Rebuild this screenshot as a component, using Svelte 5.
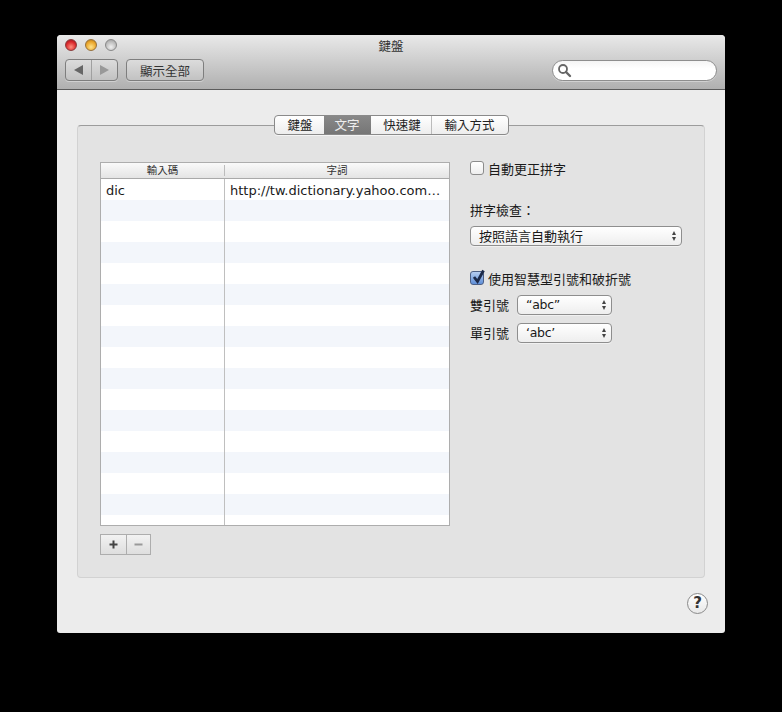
<script>
  const rows = Array(17).fill(null).map((_, index) => index);
  const tabs = ['鍵盤', '文字', '快速鍵', '輸入方式'];
  const quotes = [
    { label: '雙引號', value: '“abc”' },
    { label: '單引號', value: '‘abc’' }
  ];
</script>

<main>
  <div class="window">
    <header>
      <div class="title">鍵盤</div>
      <div class="lights">
        <span class="light red"></span>
        <span class="light amber"></span>
        <span class="light grey"></span>
      </div>
      <div class="tools">
        <div class="nav">
          <div class="navbtn back">
            <svg width="9" height="10" viewBox="0 0 9 10"><path d="M0 5 L9 0 V10 Z" fill="#666" /></svg>
          </div>
          <div class="navbtn forward">
            <svg width="9" height="10" viewBox="0 0 9 10"><path d="M9 5 L0 0 V10 Z" fill="#999" /></svg>
          </div>
        </div>
        <button class="showall">顯示全部</button>
        <div class="search">
          <svg width="15" height="15" viewBox="0 0 15 15">
            <circle cx="6" cy="6" r="4" fill="none" stroke="#666" stroke-width="1.8" />
            <path d="M9 9 L13 13" stroke="#666" stroke-width="2.4" stroke-linecap="round" />
          </svg>
        </div>
      </div>
    </header>

    <div class="content">
      <div class="tabs">
        {#each tabs as tab, i}
          <div class={i === 1 ? 'tab on' : 'tab'}>{tab}</div>
        {/each}
      </div>
      <section class="panel">
        <div class="left">
          <div class="table">
            <div class="thead">
              <div class="c1">輸入碼</div>
              <div class="c2">字詞</div>
            </div>
            <div class="tbody">
              {#each rows as row}
                <div class={row % 2 ? 'row alt' : 'row'}>
                  <div class="c1">{row === 0 ? 'dic' : ''}</div>
                  <div class="c2">{row === 0 ? 'http://tw.dictionary.yahoo.com…' : ''}</div>
                </div>
              {/each}
            </div>
          </div>
          <div class="addremove">
            <div class="ar plus">
              <svg width="11" height="11" viewBox="0 0 11 11"><path d="M5.5 1.5v8M1.5 5.5h8" stroke="#444" stroke-width="2" /></svg>
            </div>
            <div class="ar minus">
              <svg width="11" height="11" viewBox="0 0 11 11"><path d="M1.5 5.5h8" stroke="#999" stroke-width="2" /></svg>
            </div>
          </div>
        </div>

        <div class="right">
          <label class="check first">
            <span class="box"></span>
            <span>自動更正拼字</span>
          </label>
          <div class="spell">拼字檢查：</div>
          <div class="select wide">
            <span>按照語言自動執行</span>
            <span class="updown"></span>
          </div>
          <label class="check second">
            <span class="box checked">
              <svg width="17" height="17" viewBox="0 0 17 17">
                <path d="M4 8 L7.5 12.5 L13.5 1.5" fill="none" stroke="#1c2a4a" stroke-width="2.8" />
              </svg>
            </span>
            <span>使用智慧型引號和破折號</span>
          </label>
          {#each quotes as q}
            <div class="quote">
              <span class="qlabel">{q.label}</span>
              <div class="select small">
                <span>{q.value}</span>
                <span class="updown"></span>
              </div>
            </div>
          {/each}
        </div>
      </section>
      <div class="foot">
        <div class="help">?</div>
      </div>
    </div>
  </div>
</main>

<style>
  :global(body) {
    background: #000;
  }
  main {
    width: 782px;
    height: 712px;
    padding: 35px 57px 0;
    box-sizing: border-box;
    font-family: "DejaVu Sans", "Noto Sans CJK TC", sans-serif;
    font-size: 13px;
    color: #1a1a1a;
    background: #000;
  }
  .window {
    width: 668px;
    height: 598px;
    border-radius: 4px 4px 3px 3px;
    overflow: hidden;
    background: #ececec;
  }
  header {
    position: relative;
    height: 55px;
    box-sizing: border-box;
    background: linear-gradient(#e9e9e9, #b0b0b0);
    border-bottom: 1px solid #5c5c5c;
  }
  .title {
    padding-top: 4px;
    height: 16px;
    text-align: center;
    font-size: 12.5px;
    line-height: 16px;
    color: #333;
  }
  .lights {
    position: absolute;
    left: 8px;
    top: 4px;
    display: flex;
    gap: 8px;
  }
  .light {
    width: 12px;
    height: 12px;
    border-radius: 50%;
    box-sizing: border-box;
  }
  .red {
    background: radial-gradient(circle at 50% 70%, #ff8f7e, #d8262a 60%, #8f1a22);
    border: 1px solid #8a3a3a;
  }
  .amber {
    background: radial-gradient(circle at 50% 70%, #ffe38a, #eaa52a 60%, #a8741a);
    border: 1px solid #96703a;
  }
  .grey {
    background: radial-gradient(circle at 50% 70%, #f0f0f0, #bdbdbd 60%, #999);
    border: 1px solid #888;
  }
  .tools {
    display: flex;
    align-items: center;
    padding: 4px 8px 0;
  }
  .nav, .showall {
    height: 22px;
    box-sizing: border-box;
    border: 1px solid #7e7e7e;
    border-radius: 4px;
    background: linear-gradient(#dcdcdc, #c2c2c2);
    box-shadow: 0 1px 0 rgba(255, 255, 255, 0.35);
  }
  .nav {
    width: 53px;
    display: flex;
  }
  .navbtn {
    display: flex;
    align-items: center;
    justify-content: center;
    box-sizing: border-box;
  }
  .back {
    width: 26px;
    border-right: 1px solid #a0a0a0;
  }
  .forward {
    flex: 1;
  }
  .showall {
    width: 78px;
    margin-left: 8px;
    padding: 0;
    font: inherit;
    font-size: 12.5px;
    color: #333;
  }
  .search {
    width: 165px;
    height: 21px;
    margin-left: auto;
    box-sizing: border-box;
    padding-left: 4px;
    display: flex;
    align-items: center;
    background: linear-gradient(#f4f4f4, #fff 40%);
    border: 1px solid #8e8e8e;
    border-radius: 11px;
    box-shadow: 0 1px 0 rgba(255, 255, 255, 0.35);
  }
  .content {
    padding: 25px 20px 0;
  }
  .tabs {
    position: relative;
    z-index: 1;
    width: 235px;
    height: 20px;
    margin: 0 auto -10px;
    display: flex;
    box-sizing: border-box;
    border: 1px solid #8a8a8a;
    border-radius: 4px;
    background: linear-gradient(#fff, #ededed);
    overflow: hidden;
    box-shadow: 0 1px 0 rgba(255, 255, 255, 0.6);
    font-size: 12.5px;
  }
  .tab {
    line-height: 20px;
    text-align: center;
    color: #222;
    box-sizing: border-box;
  }
  .tab:nth-child(1) { width: 49px; padding-left: 2px; }
  .tab:nth-child(2) { width: 47px; }
  .tab:nth-child(3) { width: 61px; padding-left: 3px; border-right: 1px solid #bbb; }
  .tab:nth-child(4) { flex: 1; }
  .tab.on {
    background: linear-gradient(#888, #767676);
    color: #eee;
  }
  .panel {
    height: 453px;
    box-sizing: border-box;
    display: flex;
    padding: 36px 22px 0;
    background: #e3e3e3;
    border: 1px solid #d2d2d2;
    border-top-color: #9c9c9c;
    border-radius: 4px;
  }
  .left {
    width: 350px;
  }
  .table {
    height: 364px;
    box-sizing: border-box;
    border: 1px solid #adadad;
    background: #fff;
    overflow: hidden;
  }
  .thead {
    display: flex;
    height: 16px;
    box-sizing: border-box;
    border-bottom: 1px solid #a9a9a9;
    background: linear-gradient(#fafafa, #e4e4e4);
    font-size: 10.5px;
    color: #333;
    text-align: center;
    align-items: flex-start;
  }
  .thead .c1 {
    height: 11px;
    margin-top: 2px;
    line-height: 11px;
    border-right: 1px solid #bcbcbc;
  }
  .thead .c2 {
    margin-top: 2px;
    line-height: 11px;
  }
  .c1 {
    width: 124px;
    flex: none;
    box-sizing: border-box;
  }
  .c2 {
    flex: 1;
  }
  .row {
    display: flex;
    height: 21px;
    line-height: 23px;
    background: #fff;
  }
  .row.alt {
    background: #f3f6fb;
  }
  .row .c1 {
    padding-left: 5px;
    border-right: 1px solid #bfbfbf;
  }
  .row .c2 {
    padding-left: 5px;
    white-space: nowrap;
    overflow: hidden;
  }
  .addremove {
    display: flex;
    width: 51px;
    height: 21px;
    margin-top: 8px;
    box-sizing: border-box;
    border: 1px solid #adadad;
    background: linear-gradient(#f2f2f2, #dedede);
  }
  .ar {
    display: flex;
    align-items: center;
    justify-content: center;
  }
  .plus {
    width: 25px;
    border-right: 1px solid #adadad;
  }
  .minus {
    flex: 1;
  }
  .right {
    margin-left: 20px;
    width: 212px;
  }
  .check {
    display: flex;
    align-items: center;
    gap: 4px;
    height: 16px;
    white-space: nowrap;
  }
  .check.first {
    margin-top: -2px;
  }
  .check.second {
    margin-top: 24px;
  }
  .box {
    position: relative;
    width: 14px;
    height: 14px;
    flex: none;
    box-sizing: border-box;
    border: 1px solid #8c8c8c;
    border-radius: 3px;
    background: linear-gradient(#fff, #eee);
  }
  .box.checked {
    background: linear-gradient(#b5cdf0, #5f8fd8);
    border-color: #4c5f85;
  }
  .box svg {
    position: absolute;
    left: -1px;
    top: -3px;
  }
  .spell {
    margin-top: 26px;
    line-height: 18px;
  }
  .select {
    position: relative;
    height: 20px;
    line-height: 20px;
    box-sizing: border-box;
    border: 1px solid #8e8e8e;
    border-radius: 4px;
    background: linear-gradient(#fff, #eee);
    padding-left: 8px;
    box-shadow: 0 1px 0 rgba(255, 255, 255, 0.5);
  }
  .select.wide {
    margin-top: 6px;
    width: 212px;
  }
  .select.small {
    width: 95px;
    font-size: 12.5px;
    line-height: 18px;
    letter-spacing: -0.3px;
  }
  .updown {
    position: absolute;
    right: 5px;
    top: 4px;
    width: 0;
    height: 0;
    border-left: 2.5px solid transparent;
    border-right: 2.5px solid transparent;
    border-bottom: 4px solid #444;
  }
  .updown::after {
    content: "";
    position: absolute;
    left: -2.5px;
    top: 6px;
    border-left: 2.5px solid transparent;
    border-right: 2.5px solid transparent;
    border-top: 4px solid #444;
  }
  .quote {
    display: flex;
    align-items: center;
    gap: 8px;
    margin-top: 8px;
    height: 20px;
  }
  .check.second + .quote {
    margin-top: 9px;
  }
  .qlabel {
    width: 39px;
    margin-top: -2px;
  }
  .foot {
    display: flex;
    justify-content: flex-end;
    padding: 15px 0 0;
    margin-right: -3px;
  }
  .help {
    width: 21px;
    height: 21px;
    box-sizing: border-box;
    border: 1px solid #8a8a8a;
    border-radius: 50%;
    background: linear-gradient(#fff, #e8e8e8);
    text-align: center;
    font-size: 15px;
    font-weight: bold;
    line-height: 19px;
    color: #333;
  }
</style>
